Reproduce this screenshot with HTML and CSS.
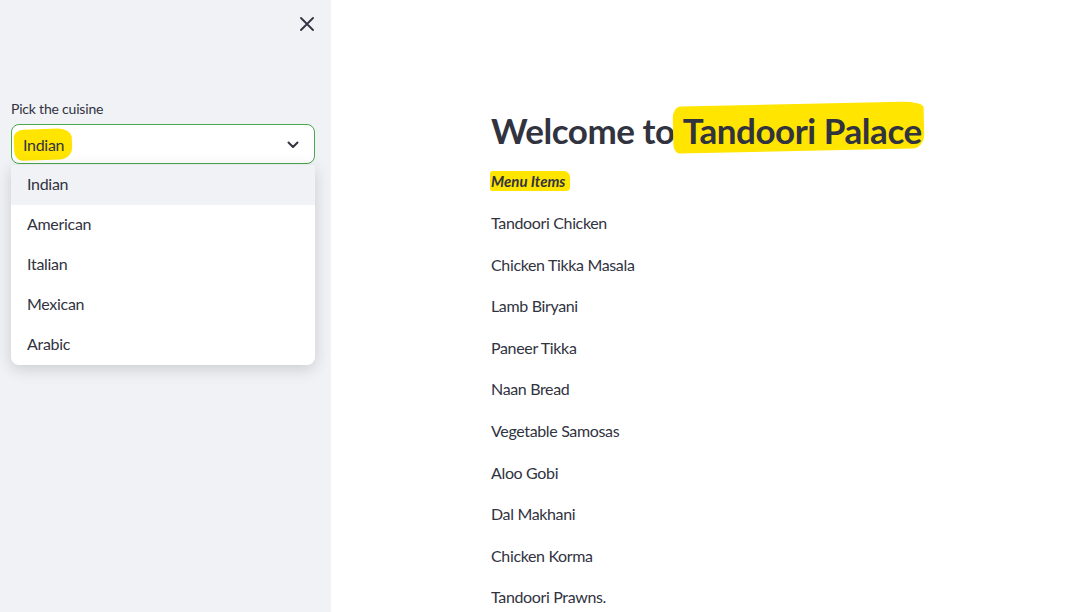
FILE: index.html
```html
<!DOCTYPE html>
<html lang="en">
<head>
<meta charset="utf-8">
<title>Tandoori Palace</title>
<link rel="stylesheet" href="styles.css">
</head>
<body>
<div class="app">
  <aside class="sidebar">
    <div class="sidebar-head">
      <button class="close" aria-label="Close sidebar">
        <svg width="14" height="14" viewBox="0 0 14 14"><path d="M1 1L13 13M13 1L1 13" stroke="#31333f" stroke-width="1.8" stroke-linecap="round"/></svg>
      </button>
    </div>
    <div class="field">
      <label class="label">Pick the cuisine</label>
      <div class="select">
        <span class="value"><span class="mark mark-sm">Indian</span></span>
        <svg class="chev" width="12" height="8" viewBox="0 0 12 8"><path d="M1.5 1.5L6 6L10.5 1.5" fill="none" stroke="#31333f" stroke-width="2" stroke-linecap="round" stroke-linejoin="round"/></svg>
        <ul class="menu">
          <li class="opt active">Indian</li>
          <li class="opt">American</li>
          <li class="opt">Italian</li>
          <li class="opt">Mexican</li>
          <li class="opt">Arabic</li>
        </ul>
      </div>
    </div>
  </aside>
  <main class="main">
    <h1 class="title">Welcome to <span class="mark mark-lg">Tandoori Palace</span></h1>
    <p class="sub"><em class="mark mark-md">Menu Items</em></p>
    <p class="item">Tandoori Chicken</p>
    <p class="item">Chicken Tikka Masala</p>
    <p class="item">Lamb Biryani</p>
    <p class="item">Paneer Tikka</p>
    <p class="item">Naan Bread</p>
    <p class="item">Vegetable Samosas</p>
    <p class="item">Aloo Gobi</p>
    <p class="item">Dal Makhani</p>
    <p class="item">Chicken Korma</p>
    <p class="item">Tandoori Prawns.</p>
  </main>
</div>
</body>
</html>
```
FILE: styles.css
```css
* { box-sizing: border-box; }
html, body { margin: 0; padding: 0; }
body {
  font-family: Lato, "Liberation Sans", sans-serif;
  color: #31333f;
  background: #ffffff;
  width: 1088px;
  height: 612px;
  overflow: hidden;
}
.app { display: flex; height: 612px; }

.sidebar {
  width: 331px;
  flex: none;
  background: #f0f2f6;
  display: flex;
  flex-direction: column;
}
.sidebar-head {
  display: flex;
  justify-content: flex-end;
  padding: 17px 17px 0 0;
  height: 99px;
}
.close {
  border: 0;
  background: none;
  padding: 0;
  width: 14px;
  height: 14px;
  display: flex;
}
.field { padding: 0 16px 0 11px; }
.label {
  display: block;
  font-size: 14px;
  line-height: 20px;
  margin-bottom: 5px;
  letter-spacing: -0.2px;
  color: #31333f;
}
.select {
  position: relative;
  height: 40px;
  background: #ffffff;
  border: 1px solid #4aa84e;
  border-radius: 8px;
  display: flex;
  align-items: center;
  justify-content: space-between;
  padding: 0 15px 0 11px;
  font-size: 16px;
  letter-spacing: -0.3px;
}
.value { display: flex; align-items: center; }
.chev { flex: none; margin-top: 1px; }

.menu {
  position: absolute;
  left: -1px;
  right: -1px;
  top: 40px;
  margin: 0;
  padding: 0;
  list-style: none;
  background: #ffffff;
  border-radius: 0 0 8px 8px;
  box-shadow: 0 4px 16px rgba(0, 0, 0, 0.16);
  overflow: hidden;
  z-index: 2;
}
.opt {
  height: 40px;
  display: flex;
  align-items: center;
  padding: 0 0 4px 16px;
  font-size: 16px;
  color: #31333f;
}
.opt.active { background: #f0f2f6; }

.main {
  flex: 1;
  padding: 106px 0 0 160px;
}
.title {
  margin: 0 0 17px 0;
  font-size: 35px;
  font-weight: 700;
  line-height: 48px;
  letter-spacing: -0.45px;
  color: #31333f;
}
.sub {
  margin: 0 0 19px 0;
  font-size: 15px;
  line-height: 20px;
}
.sub em { font-weight: 700; font-style: italic; }
.item {
  margin: 0 0 16px 0;
  font-size: 16px;
  line-height: 25.6px;
  letter-spacing: -0.35px;
}

.mark { position: relative; z-index: 0; }
.mark::before {
  content: "";
  position: absolute;
  background: #ffe500;
  z-index: -1;
}
.mark-lg::before {
  left: -10px; right: -2px; top: -5px; bottom: 0px;
  border-radius: 8px 22px 12px 6px / 12px 6px 14px 10px;
  transform: rotate(-1.2deg);
}
.mark-md::before {
  left: -1px; right: -5px; top: -1px; bottom: -1px;
  border-radius: 3px 6px 4px 2px;
}
.mark-sm::before {
  left: -9px; right: -8px; top: -6px; bottom: -6px;
  border-radius: 10px 14px 12px 8px / 8px 10px 12px 10px;
  transform: rotate(-2deg);
}
```
